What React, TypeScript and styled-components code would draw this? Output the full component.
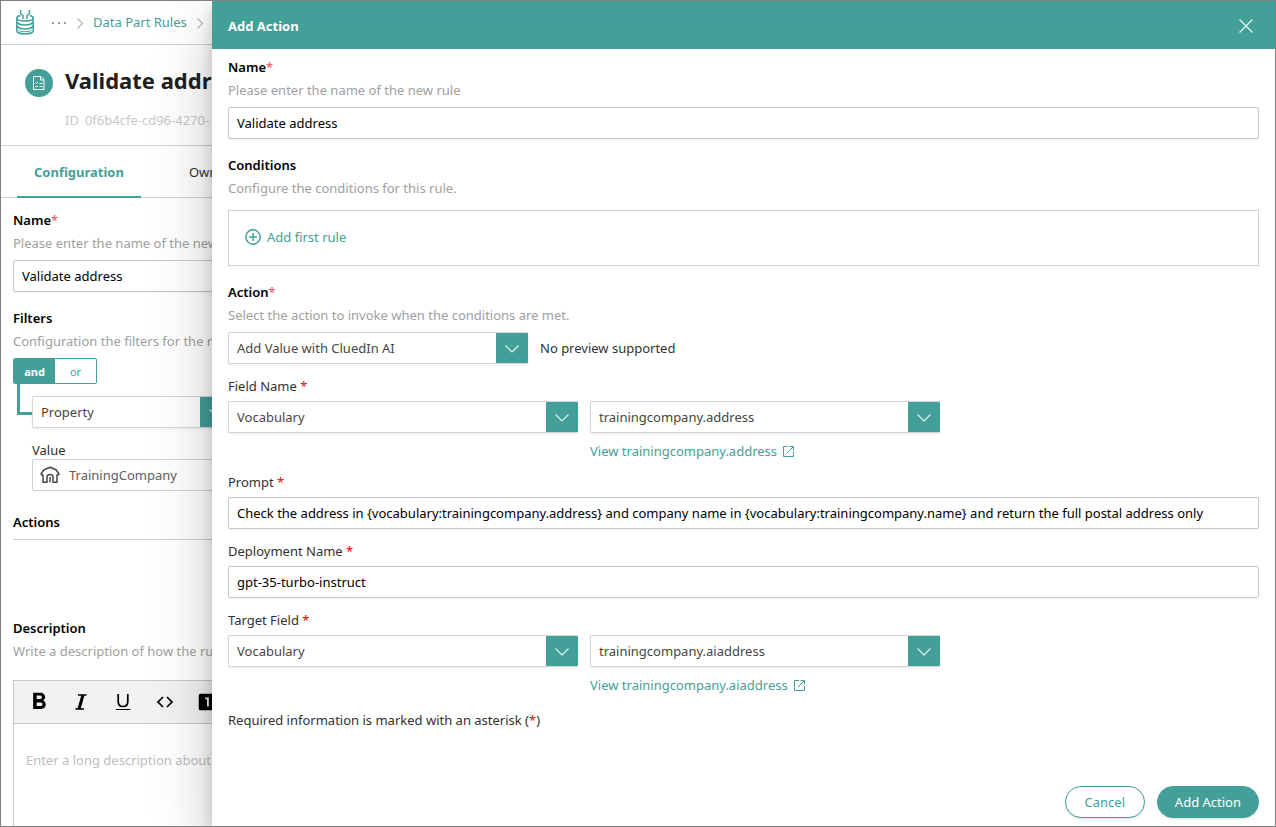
import React from 'react';
import styled, { createGlobalStyle } from 'styled-components';
import { MdFormatBold, MdLooksOne } from 'react-icons/md';

const teal = '#43a098';

const GlobalStyle = createGlobalStyle`
  *, *::before, *::after { box-sizing: border-box; }
  body {
    margin: 0;
    background: #fff;
    color: #323130;
    font-family: "Noto Sans", "Open Sans", sans-serif;
    font-size: 13px;
    line-height: 20px;
  }
  button, input, select, textarea { font: inherit; }
  h1, h2, p { margin: 0; }
  a { color: ${teal}; text-decoration: none; }
  svg { display: block; flex: none; }
`;

const Frame = styled.div`
  position: relative;
  display: flex;
  flex-direction: column;
  height: 100vh;
  overflow: hidden;
  border: 1px solid #808080;
`;

/* ---------- page ---------- */

const TopBar = styled.header`
  display: flex;
  align-items: center;
  height: 44px;
  padding: 0 14px 2px;
  border-bottom: 1px solid #d2d0ce;
`;

const Crumbs = styled.nav`
  display: flex;
  align-items: center;
  gap: 9px;
  margin-left: 16px;
`;

const PageHeader = styled.section`
  display: flex;
  gap: 12px;
  height: 101px;
  padding: 20px 24px 0;
  border-bottom: 1px solid #d2d0ce;
`;

const RuleBadge = styled.span`
  display: grid;
  place-items: center;
  width: 28px;
  height: 28px;
  margin-top: 4px;
  border-radius: 50%;
  background: ${teal};
`;

const PageTitle = styled.h1`
  color: #201f1e;
  font-size: 22px;
  font-weight: 700;
  line-height: 30px;
`;

const RuleId = styled.p`
  display: flex;
  gap: 6px;
  margin-top: 15px;
  color: #c8c8c8;
`;

const Tabs = styled.nav`
  display: flex;
  gap: 32px;
  height: 52px;
  padding: 0 16px;
  border-bottom: 1px solid #d2d0ce;
`;

const Tab = styled.button<{ $active?: boolean }>`
  height: 52px;
  padding: 2px ${(p) => (p.$active ? 17 : 16)}px 0;
  border: 0;
  border-bottom: 2px solid ${(p) => (p.$active ? teal : 'transparent')};
  background: none;
  color: ${(p) => (p.$active ? teal : '#323130')};
  font-weight: ${(p) => (p.$active ? 700 : 400)};
`;

const PageForm = styled.main`
  display: flex;
  flex: 1;
  flex-direction: column;
  min-height: 0;
  padding: 12px 12px 0;
`;

/* ---------- shared form parts ---------- */

const Section = styled.section`
  display: flex;
  flex-direction: column;
  margin-bottom: 16px;
`;

const Heading = styled.label`
  color: #000;
  font-size: 13px;
  font-weight: 600;
`;

const Mark = styled.span<{ $strong?: boolean }>`
  color: ${(p) => (p.$strong ? '#f00000' : '#e8686c')};
`;

const Hint = styled.p<{ $gap?: number }>`
  margin: 3px 0 ${(p) => p.$gap ?? 7}px;
  color: #a0a0a0;
`;

const TextInput = styled.input`
  width: 100%;
  height: 32px;
  padding: 0 8px;
  border: 1px solid #c8c8c8;
  border-radius: 2px;
  background: #fff;
  box-shadow: 0 1px 2px rgba(0, 0, 0, 0.06);
  color: #000;
  outline: 0;
`;

const SelectBox = styled.div<{ $width: number }>`
  display: grid;
  grid-template-columns: minmax(0, 1fr) 31px;
  grid-template-rows: minmax(0, 1fr);
  width: ${(p) => p.$width}px;
  height: 32px;
  border: 1px solid #d6d6d6;
  border-right-color: ${teal};
  border-radius: 2px;
  background: #fff;
  box-shadow: 0 1px 2px rgba(0, 0, 0, 0.08);
`;

const NativeSelect = styled.select`
  grid-area: 1 / 1 / 2 / 3;
  min-width: 0;
  padding: 0 40px 0 8px;
  border: 0;
  background: none;
  color: #484644;
  line-height: 20px;
  appearance: none;
  outline: 0;
`;

const SelectArrow = styled.span`
  display: grid;
  grid-area: 1 / 2 / 2 / 3;
  place-items: center;
  background: ${teal};
  pointer-events: none;
`;

const JoinGroup = styled.div`
  display: flex;
  align-self: flex-start;
  width: 84px;
  height: 26px;
  border: 1px solid ${teal};
  border-radius: 2px;
  overflow: hidden;
`;

const JoinButton = styled.button<{ $active?: boolean }>`
  flex: 1;
  padding: 1px 0 0;
  border: 0;
  background: ${(p) => (p.$active ? teal : '#fff')};
  color: ${(p) => (p.$active ? '#fff' : teal)};
  font-size: 11px;
  font-weight: ${(p) => (p.$active ? 700 : 400)};
  line-height: 24px;
`;

const FilterRow = styled.div`
  display: flex;
  margin-left: 4px;
`;

const Branch = styled.span`
  width: 15px;
  height: 31px;
  border: solid ${teal};
  border-width: 0 0 3px 3px;
`;

const FilterFields = styled.div`
  display: flex;
  flex: 1;
  flex-direction: column;
  padding-top: 12px;
`;

const FilterLabel = styled.label`
  margin-top: 13px;
  line-height: 18px;
`;

const ValueBox = styled.div`
  display: flex;
  align-items: center;
  height: 32px;
  padding-left: 7px;
  border: 1px solid #d2d2d2;
  border-radius: 2px;
`;

const ValueInput = styled.input`
  flex: 1;
  min-width: 0;
  border: 0;
  padding: 0 8px 0 9px;
  background: none;
  color: #605e5c;
  outline: 0;
`;

const ActionsHead = styled.h2`
  height: 28px;
  margin: 5px 0 78px;
  border-bottom: 1px solid #d2d0ce;
  color: #000;
  font-size: 13px;
  font-weight: 600;
`;

const Editor = styled.div`
  display: flex;
  flex: 1;
  flex-direction: column;
  min-height: 0;
  border: 1px solid #c8c8c8;
  border-bottom: 0;
`;

const EditorBar = styled.div`
  display: flex;
  gap: 14px;
  height: 43px;
  padding: 0 11px;
  border-bottom: 1px solid #c8c8c8;
  background: #f3f2f1;
`;

const EditorButton = styled.button`
  display: grid;
  place-items: center;
  width: 28px;
  padding: 0;
  border: 0;
  background: none;
  color: #000;
`;

const EditorArea = styled.textarea`
  flex: 1;
  padding: 26px 12px;
  border: 0;
  background: none;
  resize: none;
  outline: 0;
  &::placeholder { color: #bdbdbd; opacity: 1; }
`;

/* ---------- drawer ---------- */

const Drawer = styled.aside`
  position: absolute;
  inset: 0 0 0 211px;
  display: flex;
  flex-direction: column;
  background: #fff;
  box-shadow: 0 26px 58px rgba(0, 0, 0, 0.22), 0 5px 14px rgba(0, 0, 0, 0.18);
`;

const DrawerHeader = styled.header`
  display: flex;
  align-items: center;
  justify-content: space-between;
  height: 48px;
  padding: 2px 15px 0 16px;
  background: ${teal};
  color: #fff;
`;

const DrawerTitle = styled.h2`
  font-size: 13px;
  font-weight: 700;
`;

const CloseButton = styled.button`
  display: grid;
  place-items: center;
  width: 28px;
  height: 28px;
  padding: 0;
  border: 0;
  background: none;
  color: #fff;
`;

const DrawerBody = styled.form`
  display: flex;
  flex: 1;
  flex-direction: column;
  padding: 8px 16px;
`;

const Conditions = styled.div`
  height: 56px;
  padding: 16px;
  border: 1px solid #d2d0ce;
`;

const AddRule = styled.button`
  display: flex;
  align-items: center;
  gap: 6px;
  height: 20px;
  padding: 0;
  border: 0;
  background: none;
  color: ${teal};
`;

const Field = styled.div`
  display: flex;
  flex-direction: column;
  gap: 5px;
  margin-bottom: 12px;
`;

const FieldRow = styled.div`
  display: flex;
  align-items: flex-start;
  gap: 12px;
  line-height: 32px;
`;

const Target = styled.div`
  display: flex;
  flex-direction: column;
  gap: 9px;
`;

const ViewLink = styled.a`
  display: flex;
  align-items: center;
  gap: 6px;
  line-height: 18px;
`;

const Note = styled.p`
  margin-top: 4px;
`;

const DrawerFooter = styled.footer`
  display: flex;
  justify-content: flex-end;
  gap: 12px;
  padding: 8px 16px;
`;

const PillButton = styled.button<{ $primary?: boolean }>`
  min-width: 80px;
  height: 32px;
  padding: 0 17px;
  border: 1px solid ${teal};
  border-radius: 16px;
  background: ${(p) => (p.$primary ? teal : '#fff')};
  box-shadow: 0 1px 2px rgba(0, 0, 0, 0.12);
  color: ${(p) => (p.$primary ? '#fff' : teal)};
`;

/* ---------- icons ---------- */

const Logo = () => (
  <svg width="20" height="26" viewBox="0 0 20 26" fill="none" stroke={teal} strokeWidth="1.5">
    <path d="M5.500 1v3.500l2.500 2v3.500M14.500 1v3.500l-2.500 2v3.500" />
    <path d="M5.500 6.500C3 7 1.800 7.800 1.800 9c0 1.800 3.700 3 8.200 3s8.200-1.200 8.200-3c0-1.200-1.200-2-3.700-2.500" />
    <path d="M1.800 9v13c0 1.600 3.700 2.900 8.200 2.900s8.200-1.300 8.200-2.900V9" />
    <path d="M1.800 13c1.200 1.900 4.300 2.900 8.200 2.900s7-1 8.200-2.900M1.800 17c1.200 1.900 4.300 2.900 8.200 2.900s7-1 8.200-2.900" />
    <path d="M3.500 21.500c1.500.8 3.800 1.200 6.500 1.200s5-.4 6.500-1.200" strokeWidth="1" />
  </svg>
);

const Dots = () => (
  <svg width="16" height="4" viewBox="0 0 16 4" fill="#a19f9d">
    <rect x="1" y="2" width="2" height="2" />
    <rect x="7" y="2" width="2" height="2" />
    <rect x="13" y="2" width="2" height="2" />
  </svg>
);

const CrumbArrow = () => (
  <svg width="8" height="16" viewBox="0 0 8 16" fill="none" stroke="#b8b6b4" strokeWidth="1.200">
    <path d="M1.500 4.500l5 5-5 5" />
  </svg>
);

const RuleIcon = () => (
  <svg width="14" height="16" viewBox="0 0 14 16" fill="none" stroke="#fff">
    <path d="M1.500 1.500h7.500l3 3v10h-10.500zM8.500 1.500v3.500h3.500" />
    <path d="M3.500 7.500l1 1 1.500-1.500M7.500 8.500h3M3.500 11.500h2.500M7.500 11.500h3" />
  </svg>
);

const ChevronDown = () => (
  <svg width="16" height="16" viewBox="0 0 16 16" fill="none" stroke="#e6f3f2" strokeWidth="1.100">
    <path d="M1.500 5.500l6.500 6.500L14.500 5.500" />
  </svg>
);

const HomeIcon = () => (
  <svg width="20" height="18" viewBox="0 0 20 18" fill="none" stroke="#484644" strokeWidth="1.500" strokeLinejoin="round">
    <path d="M3 8.800H1.200V7.500L4 3.800l6-2.500 6 2.500 2.800 3.700v1.300H17M3 8.500v7.800h4v-5c0-1.800 1.200-2.800 3-2.800s3 1 3 2.800v5h4V8.500M10 11v5.300" />
  </svg>
);

const ItalicIcon = () => (
  <svg width="20" height="20" viewBox="0 0 20 20" fill="none" stroke="#000">
    <path d="M7 3h8.500M4.500 17h8.500" strokeWidth="1.600" />
    <path d="M12 3l-4 14" strokeWidth="3" />
  </svg>
);

const UnderlineIcon = () => (
  <svg width="20" height="20" viewBox="0 0 20 20" fill="none" stroke="#000" strokeWidth="1.700">
    <path d="M5.200 2v7.500c0 3.300 1.600 5 4.800 5s4.800-1.700 4.800-5V2" />
    <path d="M3 17.500h14.500" strokeWidth="1" />
  </svg>
);

const CodeIcon = () => (
  <svg width="20" height="20" viewBox="0 0 20 20" fill="none" stroke="#000" strokeWidth="1.700">
    <path d="M8 5l-5 5 5 5M12 5l5 5-5 5" />
  </svg>
);

const PlusCircle = () => (
  <svg width="16" height="16" viewBox="0 0 16 16" fill="none" stroke={teal} strokeWidth="1.500">
    <circle cx="8" cy="8" r="7.200" />
    <path d="M8 4v8M4 8h8" />
  </svg>
);

const ExternalIcon = () => (
  <svg width="11" height="11" viewBox="0 0 11 11" fill="none" stroke={teal}>
    <path d="M5 .5H.5v10h10V6M6.500.5h4v4" />
    <path d="M4 7l6-6" />
  </svg>
);

const CloseIcon = () => (
  <svg width="16" height="16" viewBox="0 0 16 16" fill="none" stroke="#e6f3f2" strokeWidth="1.300">
    <path d="M1.500 1.500l13 13M14.500 1.500l-13 13" />
  </svg>
);

/* ---------- composites ---------- */

type SelectProps = { label: string; value: string; width: number; id?: string };

const Select = ({ label, value, width, id }: SelectProps) => (
  <SelectBox $width={width}>
    <NativeSelect id={id} aria-label={label} defaultValue={value}>
      <option>{value}</option>
    </NativeSelect>
    <SelectArrow>
      <ChevronDown />
    </SelectArrow>
  </SelectBox>
);

const VocabularyField = ({ id, label, target }: { id: string; label: string; target: string }) => (
  <Field>
    <label htmlFor={id}>
      {label} <Mark $strong>*</Mark>
    </label>
    <FieldRow>
      <Select id={id} label={label} value="Vocabulary" width={350} />
      <Target>
        <Select label={`${label} key`} value={target} width={350} />
        <ViewLink href="#">
          View {target}
          <ExternalIcon />
        </ViewLink>
      </Target>
    </FieldRow>
  </Field>
);

const TextField = ({ id, label, value }: { id: string; label: string; value: string }) => (
  <Field>
    <label htmlFor={id}>
      {label} <Mark $strong>*</Mark>
    </label>
    <TextInput id={id} defaultValue={value} />
  </Field>
);

const RulePage = () => (
  <>
    <TopBar>
      <Logo />
      <Crumbs aria-label="Breadcrumb">
        <Dots />
        <CrumbArrow />
        <a href="#">Data Part Rules</a>
        <CrumbArrow />
      </Crumbs>
    </TopBar>
    <PageHeader>
      <RuleBadge>
        <RuleIcon />
      </RuleBadge>
      <div>
        <PageTitle>Validate addr</PageTitle>
        <RuleId>
          <span>ID</span>
          <span>0f6b4cfe-cd96-4270-</span>
        </RuleId>
      </div>
    </PageHeader>
    <Tabs>
      <Tab $active>Configuration</Tab>
      <Tab>Own</Tab>
    </Tabs>
    <PageForm>
      <Section>
        <Heading htmlFor="rule-name">
          Name<Mark>*</Mark>
        </Heading>
        <Hint>Please enter the name of the new</Hint>
        <TextInput id="rule-name" defaultValue="Validate address" />
      </Section>
      <Section>
        <Heading as="h2">Filters</Heading>
        <Hint>Configuration the filters for the r</Hint>
        <JoinGroup>
          <JoinButton $active>and</JoinButton>
          <JoinButton>or</JoinButton>
        </JoinGroup>
        <FilterRow>
          <Branch />
          <FilterFields>
            <Select label="Filter type" value="Property" width={200} />
            <FilterLabel htmlFor="filter-value">Value</FilterLabel>
            <ValueBox>
              <HomeIcon />
              <ValueInput id="filter-value" defaultValue="TrainingCompany" />
            </ValueBox>
          </FilterFields>
        </FilterRow>
      </Section>
      <ActionsHead>Actions</ActionsHead>
      <Heading htmlFor="description">Description</Heading>
      <Hint $gap={19}>Write a description of how the ru</Hint>
      <Editor>
        <EditorBar>
          <EditorButton aria-label="Bold">
            <MdFormatBold size={28} />
          </EditorButton>
          <EditorButton aria-label="Italic">
            <ItalicIcon />
          </EditorButton>
          <EditorButton aria-label="Underline">
            <UnderlineIcon />
          </EditorButton>
          <EditorButton aria-label="Code">
            <CodeIcon />
          </EditorButton>
          <EditorButton aria-label="Heading one">
            <MdLooksOne size={22} />
          </EditorButton>
        </EditorBar>
        <EditorArea id="description" placeholder="Enter a long description about" />
      </Editor>
    </PageForm>
  </>
);

const AddActionDrawer = () => (
  <Drawer role="dialog" aria-label="Add Action">
    <DrawerHeader>
      <DrawerTitle>Add Action</DrawerTitle>
      <CloseButton aria-label="Close">
        <CloseIcon />
      </CloseButton>
    </DrawerHeader>
    <DrawerBody onSubmit={(e) => e.preventDefault()}>
      <Section>
        <Heading htmlFor="action-name">
          Name<Mark>*</Mark>
        </Heading>
        <Hint>Please enter the name of the new rule</Hint>
        <TextInput id="action-name" defaultValue="Validate address" />
      </Section>
      <Section>
        <Heading as="h2">Conditions</Heading>
        <Hint $gap={12}>Configure the conditions for this rule.</Hint>
        <Conditions>
          <AddRule type="button">
            <PlusCircle />
            Add first rule
          </AddRule>
        </Conditions>
      </Section>
      <Heading htmlFor="action-type">
        Action<Mark>*</Mark>
      </Heading>
      <Hint>Select the action to invoke when the conditions are met.</Hint>
      <Field>
        <FieldRow>
          <Select id="action-type" label="Action" value="Add Value with CluedIn AI" width={300} />
          <span>No preview supported</span>
        </FieldRow>
      </Field>
      <VocabularyField id="field-name" label="Field Name" target="trainingcompany.address" />
      <TextField
        id="prompt"
        label="Prompt"
        value="Check the address in {vocabulary:trainingcompany.address} and company name in {vocabulary:trainingcompany.name} and return the full postal address only"
      />
      <TextField id="deployment" label="Deployment Name" value="gpt-35-turbo-instruct" />
      <VocabularyField id="target-field" label="Target Field" target="trainingcompany.aiaddress" />
      <Note>
        Required information is marked with an asterisk (<Mark $strong>*</Mark>)
      </Note>
    </DrawerBody>
    <DrawerFooter>
      <PillButton>Cancel</PillButton>
      <PillButton $primary>Add Action</PillButton>
    </DrawerFooter>
  </Drawer>
);

const App = () => (
  <Frame>
    <GlobalStyle />
    <RulePage />
    <AddActionDrawer />
  </Frame>
);

export default App;
